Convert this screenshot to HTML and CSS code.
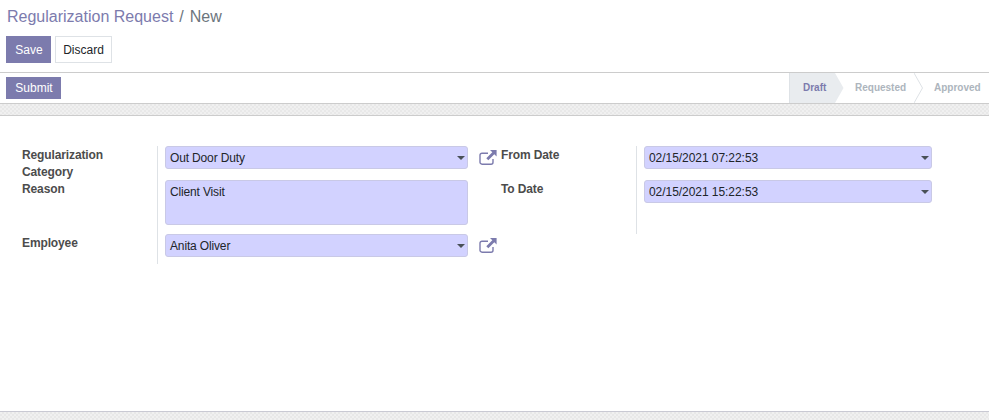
FILE: index.html
```html
<!DOCTYPE html>
<html lang="en">
<head>
  <meta charset="UTF-8">
  <meta name="viewport" content="width=device-width, initial-scale=1.0">
  <title>Regularization Request</title>
  <link rel="stylesheet" href="styles.css">
</head>
<body>
  <div class="control-panel">
    <div class="breadcrumb"><span class="crumb-link">Regularization Request</span><span class="crumb-sep">/</span><span class="crumb-active">New</span></div>
    <div class="cp-buttons">
      <button class="btn btn-primary btn-save">Save</button>
      <button class="btn btn-secondary">Discard</button>
    </div>
  </div>

  <div class="form-header">
    <button class="btn btn-primary btn-submit">Submit</button>
    <div class="statusbar">
      <div class="status status-current">Draft
        <svg class="chevron" viewBox="0 0 9 30"><path d="M0 0l8.5 15L0 30z" fill="#e9ecef"/></svg>
      </div>
      <div class="status">Requested
        <svg class="chevron" viewBox="0 0 9 30"><path d="M0 0l8.5 15L0 30" fill="#fff" stroke="#dee2e6"/></svg>
      </div>
      <div class="status">Approved</div>
    </div>
  </div>

  <div class="band band-top"></div>

  <div class="sheet">
    <div class="group group-left">
      <div class="row row-category">
        <label class="field-label">Regularization Category</label>
        <div class="field-cell">
          <div class="input select">Out Door Duty<span class="caret"></span></div>
          <svg class="ext-link" viewBox="0 0 18 18"><path d="M14 10v3.2a2 2 0 0 1-2 2H3a2 2 0 0 1-2-2V6.2a2 2 0 0 1 2-2h6" fill="none" stroke="currentColor" stroke-width="1.4"/><path d="M11 1h6.6v6.6l-2.3-2.3-6 6-2-2 6-6z" fill="currentColor"/></svg>
        </div>
      </div>
      <div class="row row-reason">
        <label class="field-label">Reason</label>
        <div class="field-cell">
          <div class="input textarea">Client Visit</div>
        </div>
      </div>
      <div class="row row-employee">
        <label class="field-label">Employee</label>
        <div class="field-cell">
          <div class="input select">Anita Oliver<span class="caret"></span></div>
          <svg class="ext-link" viewBox="0 0 18 18"><path d="M14 10v3.2a2 2 0 0 1-2 2H3a2 2 0 0 1-2-2V6.2a2 2 0 0 1 2-2h6" fill="none" stroke="currentColor" stroke-width="1.4"/><path d="M11 1h6.6v6.6l-2.3-2.3-6 6-2-2 6-6z" fill="currentColor"/></svg>
        </div>
      </div>
    </div>

    <div class="group group-right">
      <div class="row row-date">
        <label class="field-label">From Date</label>
        <div class="field-cell">
          <div class="input select">02/15/2021 07:22:53<span class="caret"></span></div>
        </div>
      </div>
      <div class="row row-date">
        <label class="field-label">To Date</label>
        <div class="field-cell">
          <div class="input select">02/15/2021 15:22:53<span class="caret"></span></div>
        </div>
      </div>
    </div>
  </div>

  <div class="band band-bottom"></div>
</body>
</html>
```

FILE: styles.css
```css
body {
  margin: 0;
  height: 420px;
  overflow: hidden;
  display: flex;
  flex-direction: column;
  font-family: "Liberation Sans", Arial, sans-serif;
  font-size: 12px;
  color: #212529;
  background-color: #fff;
}

.control-panel {
  flex: none;
  height: 73px;
  box-sizing: border-box;
  padding: 7px 6px 0;
  border-bottom: 1px solid #ccc;
}

.breadcrumb {
  font-size: 16px;
  line-height: 19px;
  padding-left: 1px;
  color: #7c7bad;
}

.crumb-sep {
  margin: 0 6px;
  color: #6c757d;
}

.crumb-active {
  color: #6c757d;
}

.cp-buttons {
  display: flex;
  gap: 4px;
  margin-top: 10px;
}

.btn {
  font-family: inherit;
  font-size: 12px;
  box-sizing: border-box;
  border-radius: 0;
  cursor: pointer;
}

.btn-primary {
  background-color: #7c7bad;
  border: 1px solid #7c7bad;
  color: #fff;
}

.btn-secondary {
  width: 57px;
  height: 27px;
  padding: 0;
  background-color: #fff;
  border: 1px solid #dee2e6;
  color: #212529;
}

.btn-save {
  width: 45px;
  height: 27px;
  padding: 0 0 0 1px;
}

.form-header {
  flex: none;
  height: 30px;
  padding-left: 6px;
  display: flex;
  justify-content: space-between;
  align-items: flex-start;
  box-sizing: border-box;
}

.btn-submit {
  width: 55px;
  height: 22px;
  padding: 0 0 0 1px;
  margin-top: 4px;
}

.statusbar {
  display: flex;
  height: 30px;
}

.status {
  position: relative;
  box-sizing: border-box;
  width: 79px;
  padding-left: 20px;
  font-size: 10px;
  font-weight: bold;
  line-height: 30px;
  color: #adb5bd;
}

.status:last-child {
  width: 75px;
}

.status-current {
  width: 46px;
  padding-left: 13px;
  background-color: #e9ecef;
  border-left: 1px solid #dee2e6;
  color: #7c7bad;
}

.chevron {
  position: absolute;
  top: 0;
  left: 100%;
  width: 9px;
  height: 30px;
  z-index: 1;
}

.band {
  flex: none;
  background-color: #ececec;
  background-image: repeating-conic-gradient(#e8e8e8 0 25%, #f0f0f0 0 50%);
  background-size: 4px 4px;
}

.band-top {
  height: 13px;
  border-top: 1px solid #ccc;
  border-bottom: 1px solid #ccc;
  box-sizing: border-box;
}

.band-bottom {
  height: 9px;
  border-top: 1px solid #c9c9d3;
  box-sizing: border-box;
}

.sheet {
  flex: 1;
  display: flex;
  align-items: flex-start;
  padding: 30px 0 0 22px;
}

.group {
  display: flex;
  flex-direction: column;
}

.group-left {
  width: 479px;
}

.group-right {
  width: 431px;
}

.row {
  display: flex;
  align-items: stretch;
}

.field-label {
  flex: none;
  width: 135px;
  box-sizing: border-box;
  font-weight: bold;
  line-height: 17px;
  padding-top: 1px;
  letter-spacing: -.12px;
  color: #4c4c4c;
}

.row-category .field-label {
  height: 34px;
  padding-right: 30px;
}

.field-cell {
  display: flex;
  align-items: flex-start;
  border-left: 1px solid #dee2e6;
  padding-left: 7px;
  padding-bottom: 11px;
}

.row-reason .field-cell {
  padding-bottom: 9px;
}

.row-employee .field-cell {
  padding-bottom: 7px;
}

.row-date:last-child .field-cell {
  padding-bottom: 31px;
}

.input {
  position: relative;
  box-sizing: border-box;
  width: 303px;
  height: 23px;
  padding: 0 4px;
  line-height: 23px;
  letter-spacing: -.15px;
  background-color: #d2d2ff;
  border: 1px solid #c9c9e6;
  border-radius: 3px;
  color: #212529;
}

.group-right .input {
  width: 288px;
  padding-left: 4px;
  letter-spacing: -.05px;
}

.textarea {
  height: 45px;
}

.caret {
  position: absolute;
  top: 9px;
  right: 2px;
  border-top: 4px solid #495057;
  border-left: 4px solid transparent;
  border-right: 4px solid transparent;
}

.ext-link {
  width: 18px;
  height: 18px;
  margin: 3px 0 0 11px;
  color: #7c7bad;
}
```
